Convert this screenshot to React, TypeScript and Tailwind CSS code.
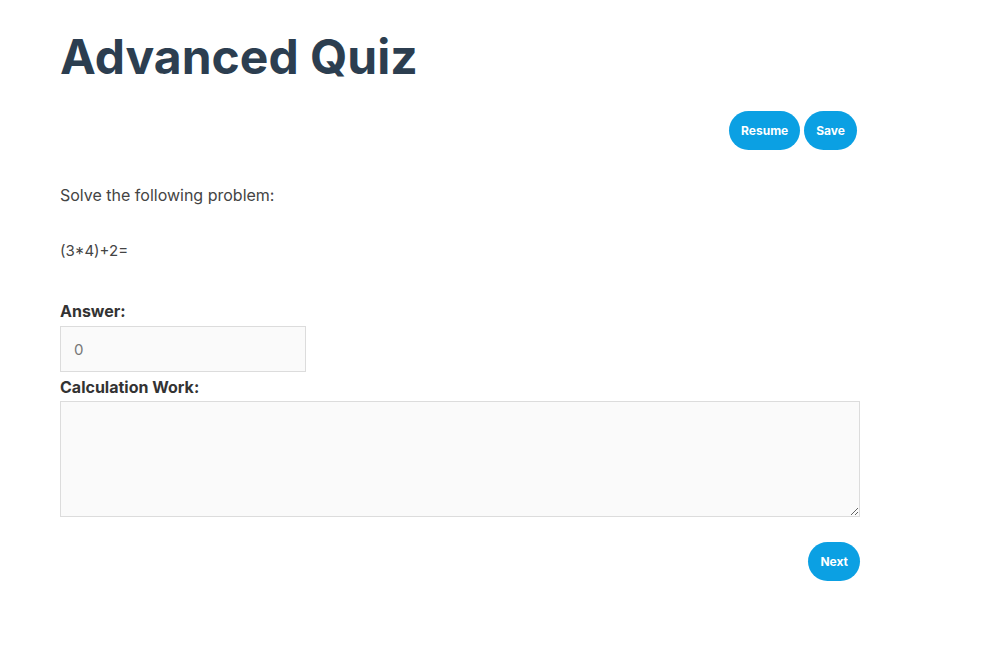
export default function App() {
  return (
    <div className="min-h-screen bg-white font-['Inter',sans-serif]">
      <div className="w-[800px] ml-[60px] pt-[28px]">
        <h1 className="text-[48px] leading-[58px] font-bold text-[#2c3e50]">Advanced Quiz</h1>

        <div className="mt-[25px] flex justify-end gap-[4px] pr-[3px]">
          <button type="button" className="h-[39px] px-[12px] rounded-full bg-[#0ba0e3] text-white text-[12px] font-bold">
            Resume
          </button>
          <button type="button" className="h-[39px] px-[12px] rounded-full bg-[#0ba0e3] text-white text-[12px] font-bold">
            Save
          </button>
        </div>

        <p className="mt-[33px] text-[16px] leading-[24px] text-[#444]">Solve the following problem:</p>
        <p className="mt-[34px] text-[15px] leading-[20px] text-[#444]">(3*4)+2=</p>

        <label className="block mt-[40px] text-[16px] leading-[20px] font-bold text-[#333]">Answer:</label>
        <input
          type="text"
          placeholder="0"
          className="mt-[5px] block w-[246px] h-[46px] px-[13px] bg-[#fafafa] border border-[#dcdcdc] text-[15px] text-[#555] placeholder:text-[#777] outline-none"
        />

        <label className="block mt-[5px] text-[16px] leading-[20px] font-bold text-[#333]">Calculation Work:</label>
        <textarea className="mt-[4px] block w-[800px] h-[116px] bg-[#fafafa] border border-[#dcdcdc] outline-none" />

        <div className="mt-[25px] flex justify-end">
          <button type="button" className="h-[39px] px-[12px] rounded-full bg-[#0ba0e3] text-white text-[12px] font-bold">
            Next
          </button>
        </div>
      </div>
    </div>
  );
}
